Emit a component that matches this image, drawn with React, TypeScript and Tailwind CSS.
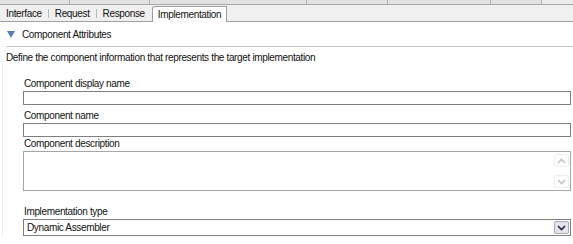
import { ReactNode } from 'react'

const font = { fontFamily: '"Liberation Sans", Arial, sans-serif' }

function Field({ label, children, className = '' }: { label: string; children: ReactNode; className?: string }) {
  return (
    <div className={className}>
      <div className="h-[13px] leading-[13px] pl-[1px]">{label}</div>
      {children}
    </div>
  )
}

function Chevron({ up, className = '' }: { up?: boolean; className?: string }) {
  return (
    <svg width="9" height="6" viewBox="0 0 9 6" className={className}>
      <path d={up ? 'M1 5 L4.5 1.5 L8 5' : 'M1 1 L4.5 4.5 L8 1'} fill="none" stroke="currentColor" strokeWidth="1.6" />
    </svg>
  )
}

export default function App() {
  return (
    <div className="w-[573px] h-[244px] bg-white overflow-hidden text-[10px] tracking-[-0.35px] text-[#111]" style={font}>
      {/* clipped editor tabs above */}
      <div className="h-[5px] flex bg-[#e2e2e2] border-b border-[#a8a8a8]">
        <div className="w-[70px] border-r border-[#b0b0b0]" />
        <div className="w-[80px] border-r border-[#b0b0b0]" />
        <div className="w-[157px] border-r border-[#b0b0b0]" />
        <div className="w-[81px] border-r border-[#b0b0b0]" />
        <div className="w-[103px] border-r border-[#b0b0b0]" />
        <div className="w-[51px] border-r border-[#b0b0b0]" />
        <div className="flex-1 bg-[#ececec]" />
      </div>

      {/* page tabs */}
      <div className="h-[17px] flex items-end bg-[#f0f0f0]">
        <div className="h-[16px] flex items-center pl-[6px] border-b border-[#a0a0a0]">
          <span>Interface</span>
          <span className="w-px h-[9px] bg-[#b8b8b8] mx-[6px]" />
          <span>Request</span>
          <span className="w-px h-[9px] bg-[#b8b8b8] mx-[6px]" />
          <span className="pr-[7px]">Response</span>
        </div>
        <div className="h-[16px] flex items-center px-[5px] bg-white border border-b-0 border-[#9c9c9c] rounded-tl-[3px] rounded-tr-[1px]">
          Implementation
        </div>
        <div className="flex-1 h-[16px] border-b border-[#a0a0a0]" />
      </div>

      {/* section header */}
      <div className="ml-[6px] h-[24px] flex items-center gap-[7px] border-b border-[#c8c8c8] mt-[1px]">
        <svg width="8" height="7" viewBox="0 0 8 7" className="ml-[1px]">
          <path d="M0 0 H8 L4 7 Z" fill="#5b7fb8" />
        </svg>
        <span>Component Attributes</span>
      </div>

      <div className="pl-[6px] h-[13px] leading-[13px] mt-[4px]">
        Define the component information that represents the target implementation
      </div>

      <div className="ml-[2px] border-l border-[#ececec] pl-[20px] pr-[2px] pt-[13px]">
        <Field label="Component display name">
          <div className="mt-[1px] h-[14px] border border-[#7f7f7f] bg-white" />
        </Field>
        <Field label="Component name" className="mt-[4px]">
          <div className="mt-[1px] h-[14px] border border-[#7f7f7f] bg-white" />
        </Field>
        <Field label="Component description">
          <div className="mt-[1px] h-[40px] border border-[#a6a6a6] bg-white flex justify-end">
            <div className="w-[16px] flex flex-col justify-between py-[2px] pr-[1px] text-[#c4c4c4]">
              <div className="h-[13px] flex items-center justify-center border border-[#eeeeee] rounded-[2px]">
                <Chevron up />
              </div>
              <div className="h-[13px] flex items-center justify-center border border-[#eeeeee] rounded-[2px]">
                <Chevron />
              </div>
            </div>
          </div>
        </Field>
        <Field label="Implementation type" className="mt-[14px]">
          <div className="mt-[1px] h-[17px] border border-[#7f7f7f] bg-white flex items-center justify-between pl-[3px] pr-[1px]">
            <span>Dynamic Assembler</span>
            <div className="w-[15px] h-[13px] flex items-center justify-center bg-[#e4e4ec] border border-[#a8a8b8] rounded-[2px] text-[#222244]">
              <Chevron />
            </div>
          </div>
        </Field>
      </div>
    </div>
  )
}
